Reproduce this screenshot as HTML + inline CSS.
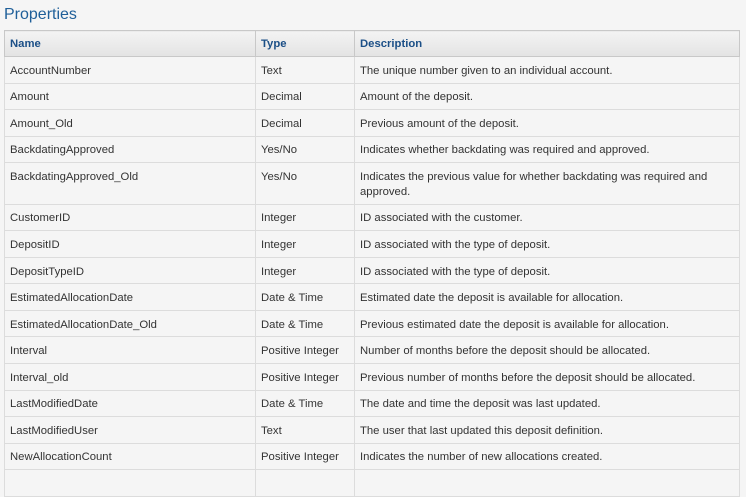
<!DOCTYPE html><html><head><style>
body{margin:0;background:#f5f5f5;font-family:"Liberation Sans",sans-serif;width:746px;height:475px;overflow:hidden}
h2{margin:0;position:absolute;left:4px;top:6px;font-weight:normal;font-size:16px;color:#1f5f99}
table{position:absolute;left:4px;top:30px;border-collapse:collapse;width:736px;font-size:11.3px;color:#333}
th{background:linear-gradient(#f3f3f3,#e3e3e3);color:#1b4f87;font-weight:bold;text-align:left;height:24px;padding:1px 5px 0;border:1px solid #c8c8c8}
td{border:1px solid #dcdcdc;padding:2px 5px 0;height:23.55px;vertical-align:middle}
td.t{vertical-align:top;padding-top:7px;line-height:15px}
</style></head><body>
<h2>Properties</h2>
<table>
<colgroup><col style="width:251px"><col style="width:99px"><col></colgroup>
<tr><th>Name</th><th>Type</th><th>Description</th></tr>
<tr><td>AccountNumber</td><td>Text</td><td>The unique number given to an individual account.</td></tr>
<tr><td>Amount</td><td>Decimal</td><td>Amount of the deposit.</td></tr>
<tr><td>Amount_Old</td><td>Decimal</td><td>Previous amount of the deposit.</td></tr>
<tr><td>BackdatingApproved</td><td>Yes/No</td><td>Indicates whether backdating was required and approved.</td></tr>
<tr><td class="t" style="height:33.5px">BackdatingApproved_Old</td><td class="t">Yes/No</td><td class="t">Indicates the previous value for whether backdating was required and approved.</td></tr>
<tr><td>CustomerID</td><td>Integer</td><td>ID associated with the customer.</td></tr>
<tr><td>DepositID</td><td>Integer</td><td>ID associated with the type of deposit.</td></tr>
<tr><td>DepositTypeID</td><td>Integer</td><td>ID associated with the type of deposit.</td></tr>
<tr><td>EstimatedAllocationDate</td><td>Date &amp; Time</td><td>Estimated date the deposit is available for allocation.</td></tr>
<tr><td>EstimatedAllocationDate_Old</td><td>Date &amp; Time</td><td>Previous estimated date the deposit is available for allocation.</td></tr>
<tr><td>Interval</td><td>Positive Integer</td><td>Number of months before the deposit should be allocated.</td></tr>
<tr><td>Interval_old</td><td>Positive Integer</td><td>Previous number of months before the deposit should be allocated.</td></tr>
<tr><td>LastModifiedDate</td><td>Date &amp; Time</td><td>The date and time the deposit was last updated.</td></tr>
<tr><td>LastModifiedUser</td><td>Text</td><td>The user that last updated this deposit definition.</td></tr>
<tr><td>NewAllocationCount</td><td>Positive Integer</td><td>Indicates the number of new allocations created.</td></tr>
<tr><td>&nbsp;</td><td></td><td></td></tr>
</table>
</body></html>
